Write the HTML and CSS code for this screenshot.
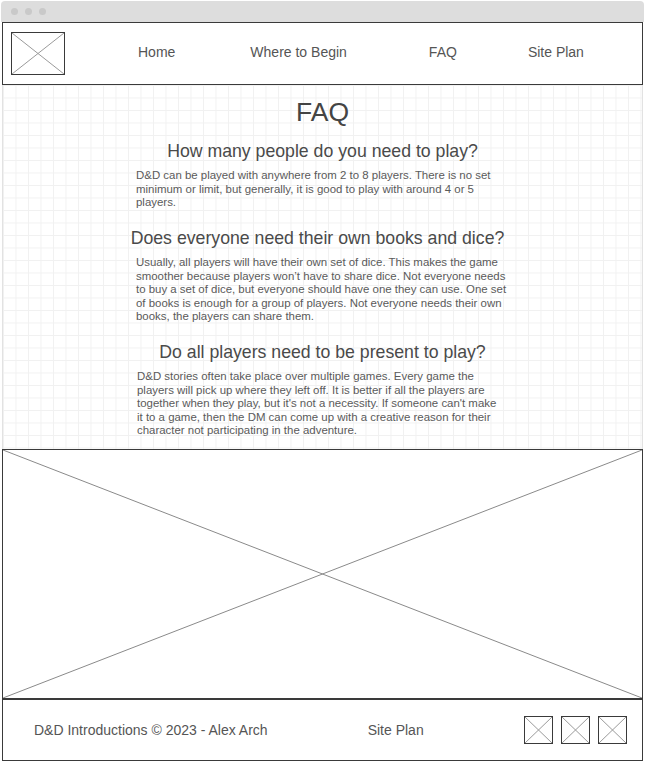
FILE: index.html
```html
<!DOCTYPE html>
<html lang="en">
<head>
<meta charset="utf-8">
<title>FAQ - D&amp;D Introductions</title>
<link rel="stylesheet" href="styles.css">
</head>
<body>
<div class="window">
  <div class="titlebar">
    <span class="dot"></span><span class="dot"></span><span class="dot"></span>
  </div>
  <header class="header">
    <div class="ph logo">
      <svg viewBox="0 0 100 100" preserveAspectRatio="none"><line x1="0" y1="0" x2="100" y2="100" vector-effect="non-scaling-stroke"/><line x1="100" y1="0" x2="0" y2="100" vector-effect="non-scaling-stroke"/></svg>
    </div>
    <nav class="nav">
      <a class="nav-home">Home</a>
      <a class="nav-begin">Where to Begin</a>
      <a class="nav-faq">FAQ</a>
      <a class="nav-plan">Site Plan</a>
    </nav>
  </header>
  <main class="content">
    <h1 class="title">FAQ</h1>
    <section class="qa">
      <h2 class="q">How many people do you need to play?</h2>
      <p class="a">D&amp;D can be played with anywhere from 2 to 8 players. There is no set minimum or limit, but generally, it is good to play with around 4 or 5 players.</p>
    </section>
    <section class="qa">
      <h2 class="q q-wide">Does everyone need their own books and dice?</h2>
      <p class="a">Usually, all players will have their own set of dice. This makes the game smoother because players won’t have to share dice. Not everyone needs to buy a set of dice, but everyone should have one they can use. One set of books is enough for a group of players. Not everyone needs their own books, the players can share them.</p>
    </section>
    <section class="qa">
      <h2 class="q">Do all players need to be present to play?</h2>
      <p class="a a-narrow">D&amp;D stories often take place over multiple games. Every game the players will pick up where they left off. It is better if all the players are together when they play, but it's not a necessity. If someone can't make it to a game, then the DM can come up with a creative reason for their character not participating in the adventure.</p>
    </section>
  </main>
  <div class="ph banner">
    <svg viewBox="0 0 100 100" preserveAspectRatio="none"><line x1="0" y1="0" x2="100" y2="100" vector-effect="non-scaling-stroke"/><line x1="100" y1="0" x2="0" y2="100" vector-effect="non-scaling-stroke"/></svg>
  </div>
  <footer class="footer">
    <span class="copy">D&amp;D Introductions © 2023 - Alex Arch</span>
    <a class="foot-link">Site Plan</a>
    <div class="socials">
      <div class="ph social"><svg viewBox="0 0 100 100" preserveAspectRatio="none"><line x1="0" y1="0" x2="100" y2="100" vector-effect="non-scaling-stroke"/><line x1="100" y1="0" x2="0" y2="100" vector-effect="non-scaling-stroke"/></svg></div>
      <div class="ph social"><svg viewBox="0 0 100 100" preserveAspectRatio="none"><line x1="0" y1="0" x2="100" y2="100" vector-effect="non-scaling-stroke"/><line x1="100" y1="0" x2="0" y2="100" vector-effect="non-scaling-stroke"/></svg></div>
      <div class="ph social"><svg viewBox="0 0 100 100" preserveAspectRatio="none"><line x1="0" y1="0" x2="100" y2="100" vector-effect="non-scaling-stroke"/><line x1="100" y1="0" x2="0" y2="100" vector-effect="non-scaling-stroke"/></svg></div>
    </div>
  </footer>
</div>
</body>
</html>
```
FILE: styles.css
```css
* { box-sizing: border-box; }
html, body { margin: 0; padding: 0; background: #fff; }
body {
  font-family: "Liberation Sans", Arial, sans-serif;
  color: #555;
}
.window {
  width: 641px;
  margin-left: 2px;
  padding-top: 1px;
}
.titlebar {
  height: 21px;
  margin: 0 -1px;
  background: #dddddd;
  border-radius: 4px 4px 0 0;
  display: flex;
  align-items: center;
  gap: 7px;
  padding-left: 10px;
}
.dot {
  width: 7px;
  height: 7px;
  border-radius: 50%;
  background: #c9c9c9;
}
.ph {
  border: 1px solid #3a3a3a;
  background: #fff;
  position: relative;
}
.ph svg {
  display: block;
  width: 100%;
  height: 100%;
}
.ph line {
  stroke: #9a9a9a;
  stroke-width: 1;
}
.header {
  height: 63px;
  border: 1px solid #3a3a3a;
  display: flex;
  align-items: center;
  padding-left: 8px;
  background: #fff;
}
.logo {
  width: 54px;
  height: 43px;
  flex: none;
}
.nav {
  display: flex;
  align-items: center;
  font-size: 14px;
  color: #555;
  margin-top: -3px;
}
.nav a { display: block; }
.nav-home { margin-left: 73px; }
.nav-begin { margin-left: 75px; }
.nav-faq { margin-left: 82px; }
.nav-plan { margin-left: 71px; }

.content {
  height: 364px;
  border-left: 1px solid #e2e2e2;
  border-right: 1px solid #e2e2e2;
  background-color: #fff;
  background-image:
    linear-gradient(to right, #f1f1f1 1px, transparent 1px),
    linear-gradient(to bottom, #f1f1f1 1px, transparent 1px);
  background-size: 12.5px 12.5px;
  padding-top: 12px;
  text-align: center;
}
.title {
  margin: 0;
  font-size: 26.5px;
  line-height: 30px;
  font-weight: normal;
  color: #444;
}
.qa { margin-top: 14px; }
.qa + .qa { margin-top: 18.5px; }
.q {
  margin: 0;
  font-size: 17.7px;
  line-height: 20px;
  font-weight: normal;
  color: #4a4a4a;
}
.q-wide { margin-right: 10px; }
.a {
  width: 373px;
  margin: 8px auto 0;
  text-align: left;
  font-size: 11.45px;
  line-height: 13.5px;
  color: #5a5a5a;
}
.a-narrow {
  width: 366px;
  margin-left: 134px;
}

.banner {
  height: 250px;
  border-left: 1px solid #3a3a3a;
}
.banner line { stroke: #8a8a8a; }

.footer {
  height: 62px;
  border: 1px solid #3a3a3a;
  display: flex;
  align-items: center;
  padding-left: 31px;
  padding-right: 15px;
  padding-bottom: 1px;
  font-size: 14px;
  color: #555;
}
.foot-link { margin-left: 100px; }
.socials {
  margin-left: auto;
  display: flex;
  gap: 8px;
}
.social {
  width: 29px;
  height: 28px;
}
```
